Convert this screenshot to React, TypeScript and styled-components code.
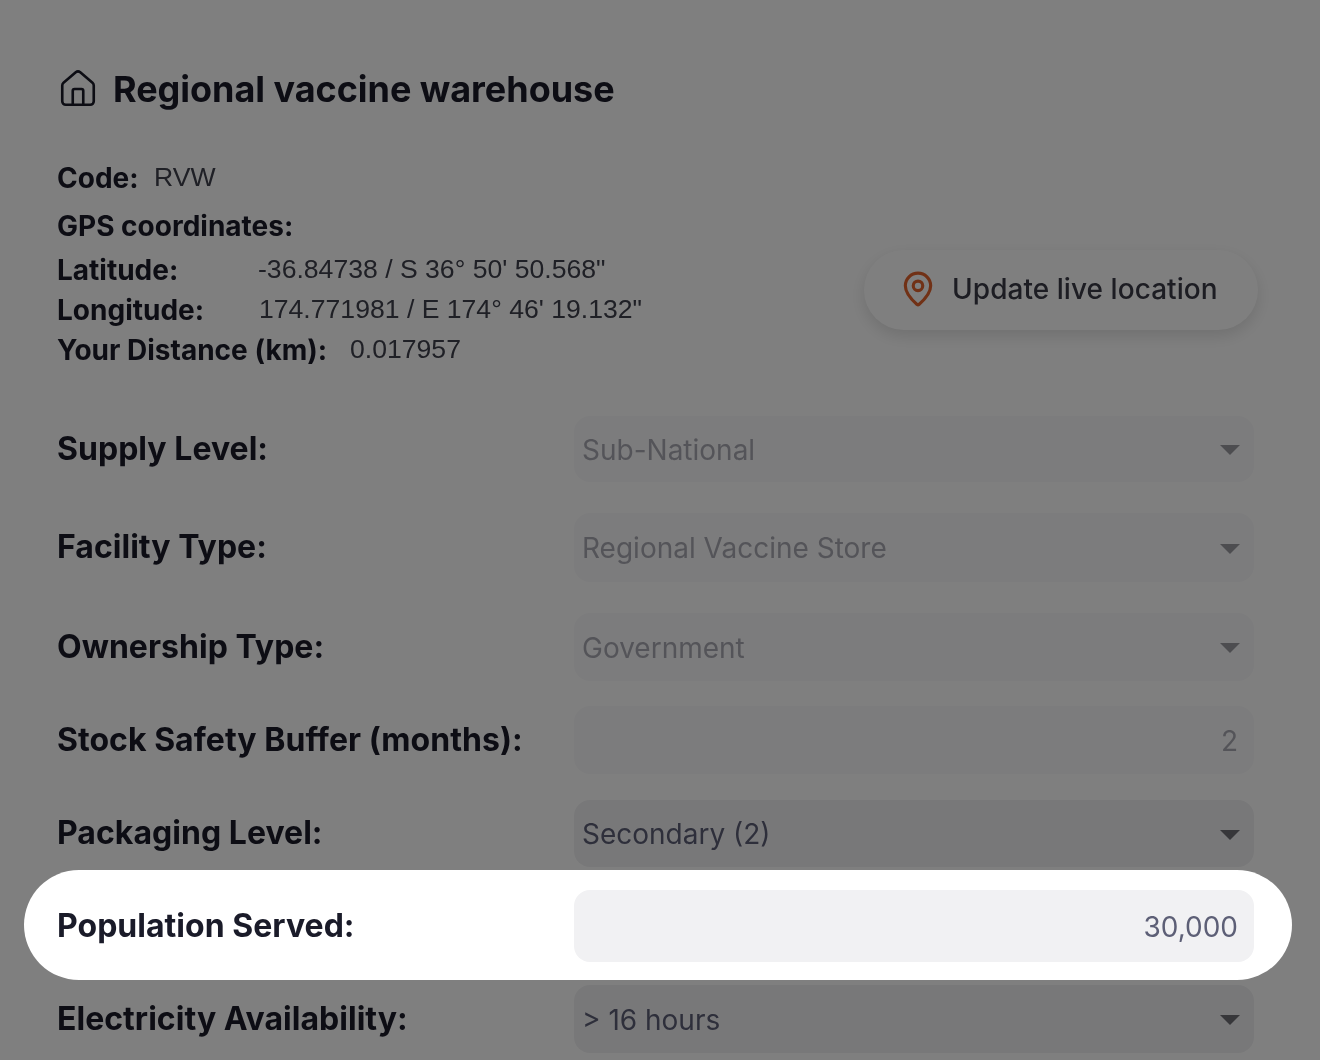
import styled, { createGlobalStyle } from 'styled-components';
import { House, MapPin } from 'lucide-react';

const GlobalStyle = createGlobalStyle`
  html, body {
    margin: 0;
    padding: 0;
    background: #7f7f7f;
  }
  body {
    font-family: 'Inter', 'Noto Sans', sans-serif;
    color: #1a1b29;
  }
`;

interface RowData {
  label: string;
  value: string;
  top: number;
  height: number;
  disabled?: boolean;
  select?: boolean;
}

const rows: RowData[] = [
  { label: 'Supply Level:', value: 'Sub-National', top: 0, height: 66, disabled: true, select: true },
  { label: 'Facility Type:', value: 'Regional Vaccine Store', top: 31, height: 69, disabled: true, select: true },
  { label: 'Ownership Type:', value: 'Government', top: 31, height: 68, disabled: true, select: true },
  { label: 'Stock Safety Buffer (months):', value: '2', top: 25, height: 68, disabled: true },
  { label: 'Packaging Level:', value: 'Secondary (2)', top: 26, height: 67, select: true },
];

const Page = styled.div`
  position: relative;
  width: 1320px;
  height: 1060px;
  overflow: hidden;
  box-sizing: border-box;
  padding: 66px 66px 0 57px;
  background: #fff;
  filter: blur(0.5px);
`;

const Heading = styled.h1`
  display: flex;
  align-items: center;
  gap: 14px;
  height: 46px;
  margin: 0 0 46px;
  font-size: 36px;
  font-weight: 700;
  letter-spacing: -0.04px;
  color: #1a1b29;

  svg {
    flex: none;
    color: #1a1b29;
  }
`;

const InfoArea = styled.section`
  display: flex;
  justify-content: space-between;
  align-items: flex-start;
  height: 258px;
  margin-right: -4px;
`;

const InfoList = styled.div`
  display: flex;
  flex-direction: column;
`;

const InfoLine = styled.div<{ $mb: number }>`
  display: flex;
  align-items: center;
  height: 40px;
  margin-bottom: ${p => p.$mb}px;
`;

const InfoLabel = styled.span<{ $w?: number }>`
  width: ${p => (p.$w ? `${p.$w}px` : 'auto')};
  font-size: 28px;
  font-weight: 700;
  letter-spacing: 0;
  color: #1a1b29;
`;

const InfoValue = styled.span`
  margin-bottom: 2px;
  font-family: 'Liberation Sans', Arial, sans-serif;
  font-size: 26.6px;
  font-weight: 400;
  color: #3f404c;
`;

const LocationButton = styled.button`
  display: flex;
  align-items: center;
  gap: 15px;
  width: 394px;
  height: 80px;
  margin-top: 92px;
  padding: 0 0 3px 35px;
  border: none;
  border-radius: 40px;
  background: #fff;
  box-shadow: 0 6px 16px rgba(0, 0, 0, 0.12);
  font-family: inherit;
  font-size: 28px;
  font-weight: 500;
  letter-spacing: 0.05px;
  color: #3a3b47;
  box-sizing: border-box;

  svg {
    flex: none;
    color: #e2632c;
  }
`;

const Form = styled.div`
  display: flex;
  flex-direction: column;
`;

const Row = styled.div<{ $top: number }>`
  display: grid;
  grid-template-columns: 517px 680px;
  align-items: center;
  margin-top: ${p => p.$top}px;
`;

const Spotlight = styled(Row)`
  position: relative;
  z-index: 2;
  margin: 3px -38px 5px -33px;
  padding: 20px 38px 18px 33px;
  border-radius: 55px;
  background: #fff;
  box-shadow: 0 0 0 2000px rgba(0, 0, 0, 0.5);
`;

const RowLabel = styled.label`
  margin-bottom: 2px;
  font-size: 32px;
  font-weight: 700;
  letter-spacing: 0.03px;
  color: #1a1b29;
`;

const Field = styled.div<{ $height: number; $disabled?: boolean }>`
  position: relative;
  display: flex;
  align-items: center;
  height: ${p => p.$height}px;
  padding: 1px 16px 0 8px;
  box-sizing: border-box;
  border-radius: 16px;
  background: ${p => (p.$disabled ? '#f9f9fa' : '#f1f1f3')};
  font-size: 28px;
  color: ${p => (p.$disabled ? '#a9a9b2' : '#5d5f76')};
`;

const NumberValue = styled.span`
  margin-left: auto;
`;

const Caret = styled.span<{ $disabled?: boolean }>`
  position: absolute;
  right: 14px;
  top: 50%;
  margin-top: -4px;
  width: 0;
  height: 0;
  border-left: 10px solid transparent;
  border-right: 10px solid transparent;
  border-top: 10px solid ${p => (p.$disabled ? '#9b9ba1' : '#6f6f74')};
`;

const App = () => {
  return (
    <>
      <GlobalStyle />
      <Page>
        <Heading>
          <House size={42} strokeWidth={1.5} />
          Regional vaccine warehouse
        </Heading>
        <InfoArea>
          <InfoList>
            <InfoLine $mb={8}>
              <InfoLabel $w={97}>Code:</InfoLabel>
              <InfoValue>RVW</InfoValue>
            </InfoLine>
            <InfoLine $mb={4}>
              <InfoLabel>GPS coordinates:</InfoLabel>
            </InfoLine>
            <InfoLine $mb={0}>
              <InfoLabel $w={201}>Latitude:</InfoLabel>
              <InfoValue>-36.84738 / S 36° 50' 50.568"</InfoValue>
            </InfoLine>
            <InfoLine $mb={0}>
              <InfoLabel $w={202}>Longitude:</InfoLabel>
              <InfoValue>174.771981 / E 174° 46' 19.132"</InfoValue>
            </InfoLine>
            <InfoLine $mb={0}>
              <InfoLabel $w={293}>Your Distance (km):</InfoLabel>
              <InfoValue>0.017957</InfoValue>
            </InfoLine>
          </InfoList>
          <LocationButton type="button">
            <MapPin size={38} strokeWidth={2} />
            Update live location
          </LocationButton>
        </InfoArea>
        <Form>
          {rows.map(row => (
            <Row key={row.label} $top={row.top}>
              <RowLabel>{row.label}</RowLabel>
              <Field $height={row.height} $disabled={row.disabled}>
                {row.select ? row.value : <NumberValue>{row.value}</NumberValue>}
                {row.select && <Caret $disabled={row.disabled} />}
              </Field>
            </Row>
          ))}
          <Spotlight $top={3}>
            <RowLabel>Population Served:</RowLabel>
            <Field $height={72}>
              <NumberValue>30,000</NumberValue>
            </Field>
          </Spotlight>
          <Row $top={0}>
            <RowLabel>Electricity Availability:</RowLabel>
            <Field $height={68}>
              &gt; 16 hours
              <Caret />
            </Field>
          </Row>
        </Form>
      </Page>
    </>
  );
};

export default App;
